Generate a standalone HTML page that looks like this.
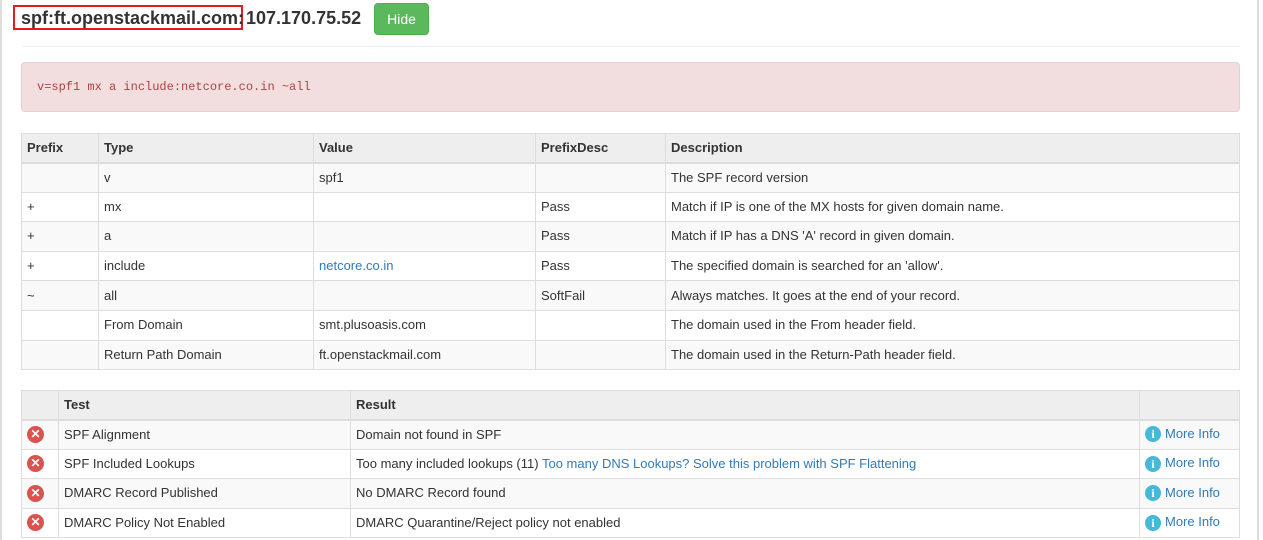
<!DOCTYPE html>
<html><head><style>
body{margin:0;width:1263px;height:540px;overflow:hidden;background:#fff;font-family:"Liberation Sans",Arial,sans-serif;font-size:13px;color:#333;position:relative}
.lb{position:absolute;left:0;top:0;width:2px;height:540px;background:#ddd}
.rb{position:absolute;left:1257px;top:0;width:2px;height:540px;background:#ddd}
.title{position:absolute;left:13px;top:5px;width:220px;height:21px;border:2px solid #e31b23;padding:0 0 0 6px;font-weight:bold;font-size:18px;line-height:22px;color:#333;white-space:nowrap}
.ip{position:absolute;left:246px;top:7px;font-weight:bold;font-size:18px;line-height:22px}
.btn{position:absolute;left:374px;top:3px;width:55px;height:32px;background:#5cb85c;border:1px solid #4cae4c;box-sizing:border-box;border-radius:4px;color:#fff;font-size:14px;line-height:30px;text-align:center}
.hr{position:absolute;left:21px;top:46px;width:1219px;height:1px;background:#eee}
.alert{position:absolute;left:21px;top:62px;width:1219px;height:50px;box-sizing:border-box;background:#f2dede;border:1px solid #ebccd1;border-radius:4px;color:#a94442;font-family:"Liberation Mono",monospace;font-size:12px;padding:17px 0 0 15px}
table{position:absolute;left:21px;width:1219px;border-collapse:collapse;table-layout:fixed}
td,th{border:1px solid #ddd;height:29.6px;box-sizing:border-box;padding:0 5px 1px;text-align:left;vertical-align:middle;white-space:nowrap;overflow:hidden}
th{background:#eee;font-weight:bold;border-bottom:2px solid #ddd;height:29px;padding:0 5px 1px}
tr:nth-child(odd) td{background:#f9f9f9}
a{color:#337ab7;text-decoration:none}
.x{display:inline-block;width:17px;height:17px;border-radius:50%;background:#d9534f;color:#fff;font-size:12px;line-height:17px;text-align:center;font-weight:bold;vertical-align:middle}
.i{display:inline-block;width:16px;height:16px;border-radius:50%;background:#46b8da;color:#fff;font-family:"Liberation Serif",serif;font-size:12px;line-height:16px;text-align:center;font-weight:bold;vertical-align:middle;margin-right:4px}
</style></head><body>
<div class="lb"></div><div class="rb"></div>
<div class="title">spf:ft.openstackmail.com:</div>
<div class="ip">107.170.75.52</div>
<div class="btn">Hide</div>
<div class="hr"></div>
<div class="alert">v=spf1 mx a include:netcore.co.in ~all</div>
<table style="top:133px">
<colgroup><col style="width:77px"><col style="width:215px"><col style="width:222px"><col style="width:130px"><col></colgroup>
<thead><tr><th>Prefix</th><th>Type</th><th>Value</th><th>PrefixDesc</th><th>Description</th></tr></thead>
<tbody>
<tr><td></td><td>v</td><td>spf1</td><td></td><td>The SPF record version</td></tr>
<tr><td>+</td><td>mx</td><td></td><td>Pass</td><td>Match if IP is one of the MX hosts for given domain name.</td></tr>
<tr><td>+</td><td>a</td><td></td><td>Pass</td><td>Match if IP has a DNS 'A' record in given domain.</td></tr>
<tr><td>+</td><td>include</td><td><a>netcore.co.in</a></td><td>Pass</td><td>The specified domain is searched for an 'allow'.</td></tr>
<tr><td>~</td><td>all</td><td></td><td>SoftFail</td><td>Always matches. It goes at the end of your record.</td></tr>
<tr><td></td><td>From Domain</td><td>smt.plusoasis.com</td><td></td><td>The domain used in the From header field.</td></tr>
<tr><td></td><td>Return Path Domain</td><td>ft.openstackmail.com</td><td></td><td>The domain used in the Return-Path header field.</td></tr>
</tbody></table>
<table style="top:390px">
<colgroup><col style="width:37px"><col style="width:292px"><col style="width:789px"><col></colgroup>
<thead><tr><th></th><th>Test</th><th>Result</th><th></th></tr></thead>
<tbody>
<tr><td><span class="x">✕</span></td><td>SPF Alignment</td><td>Domain not found in SPF</td><td><span class="i">i</span><a>More Info</a></td></tr>
<tr><td><span class="x">✕</span></td><td>SPF Included Lookups</td><td>Too many included lookups (11) <a>Too many DNS Lookups? Solve this problem with SPF Flattening</a></td><td><span class="i">i</span><a>More Info</a></td></tr>
<tr><td><span class="x">✕</span></td><td>DMARC Record Published</td><td>No DMARC Record found</td><td><span class="i">i</span><a>More Info</a></td></tr>
<tr><td><span class="x">✕</span></td><td>DMARC Policy Not Enabled</td><td>DMARC Quarantine/Reject policy not enabled</td><td><span class="i">i</span><a>More Info</a></td></tr>
</tbody></table>
</body></html>
